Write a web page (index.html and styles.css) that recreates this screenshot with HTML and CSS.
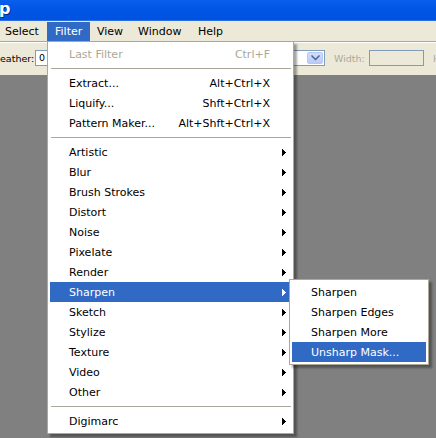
FILE: index.html
```html
<!DOCTYPE html>
<html>
<head>
<meta charset="utf-8">
<link rel="stylesheet" href="styles.css">
</head>
<body>
<div class="app">
  <div class="titlebar"><span class="title">p</span></div>
  <div class="menubar">
    <div class="mb-item mb-select">Select</div>
    <div class="mb-item mb-filter active">Filter
      <div class="menu">
        <div class="mi disabled"><span class="lbl">Last Filter</span><span class="sc">Ctrl+F</span></div>
        <div class="sep"></div>
        <div class="mi"><span class="lbl">Extract...</span><span class="sc">Alt+Ctrl+X</span></div>
        <div class="mi"><span class="lbl">Liquify...</span><span class="sc">Shft+Ctrl+X</span></div>
        <div class="mi"><span class="lbl">Pattern Maker...</span><span class="sc">Alt+Shft+Ctrl+X</span></div>
        <div class="sep"></div>
        <div class="mi sub"><span class="lbl">Artistic</span><svg class="arrow" width="4" height="7" viewBox="0 0 4 7"><path d="M0 0h1v7h-1zM1 1h1v5h-1zM2 2h1v3h-1zM3 3h1v1h-1z"/></svg></div>
        <div class="mi sub"><span class="lbl">Blur</span><svg class="arrow" width="4" height="7" viewBox="0 0 4 7"><path d="M0 0h1v7h-1zM1 1h1v5h-1zM2 2h1v3h-1zM3 3h1v1h-1z"/></svg></div>
        <div class="mi sub"><span class="lbl">Brush Strokes</span><svg class="arrow" width="4" height="7" viewBox="0 0 4 7"><path d="M0 0h1v7h-1zM1 1h1v5h-1zM2 2h1v3h-1zM3 3h1v1h-1z"/></svg></div>
        <div class="mi sub"><span class="lbl">Distort</span><svg class="arrow" width="4" height="7" viewBox="0 0 4 7"><path d="M0 0h1v7h-1zM1 1h1v5h-1zM2 2h1v3h-1zM3 3h1v1h-1z"/></svg></div>
        <div class="mi sub"><span class="lbl">Noise</span><svg class="arrow" width="4" height="7" viewBox="0 0 4 7"><path d="M0 0h1v7h-1zM1 1h1v5h-1zM2 2h1v3h-1zM3 3h1v1h-1z"/></svg></div>
        <div class="mi sub"><span class="lbl">Pixelate</span><svg class="arrow" width="4" height="7" viewBox="0 0 4 7"><path d="M0 0h1v7h-1zM1 1h1v5h-1zM2 2h1v3h-1zM3 3h1v1h-1z"/></svg></div>
        <div class="mi sub"><span class="lbl">Render</span><svg class="arrow" width="4" height="7" viewBox="0 0 4 7"><path d="M0 0h1v7h-1zM1 1h1v5h-1zM2 2h1v3h-1zM3 3h1v1h-1z"/></svg></div>
        <div class="mi sub hl"><span class="lbl">Sharpen</span><svg class="arrow" width="4" height="7" viewBox="0 0 4 7"><path d="M0 0h1v7h-1zM1 1h1v5h-1zM2 2h1v3h-1zM3 3h1v1h-1z"/></svg>
          <div class="submenu">
            <div class="mi"><span class="lbl">Sharpen</span></div>
            <div class="mi"><span class="lbl">Sharpen Edges</span></div>
            <div class="mi"><span class="lbl">Sharpen More</span></div>
            <div class="mi hl"><span class="lbl">Unsharp Mask...</span></div>
          </div>
        </div>
        <div class="mi sub"><span class="lbl">Sketch</span><svg class="arrow" width="4" height="7" viewBox="0 0 4 7"><path d="M0 0h1v7h-1zM1 1h1v5h-1zM2 2h1v3h-1zM3 3h1v1h-1z"/></svg></div>
        <div class="mi sub"><span class="lbl">Stylize</span><svg class="arrow" width="4" height="7" viewBox="0 0 4 7"><path d="M0 0h1v7h-1zM1 1h1v5h-1zM2 2h1v3h-1zM3 3h1v1h-1z"/></svg></div>
        <div class="mi sub"><span class="lbl">Texture</span><svg class="arrow" width="4" height="7" viewBox="0 0 4 7"><path d="M0 0h1v7h-1zM1 1h1v5h-1zM2 2h1v3h-1zM3 3h1v1h-1z"/></svg></div>
        <div class="mi sub"><span class="lbl">Video</span><svg class="arrow" width="4" height="7" viewBox="0 0 4 7"><path d="M0 0h1v7h-1zM1 1h1v5h-1zM2 2h1v3h-1zM3 3h1v1h-1z"/></svg></div>
        <div class="mi sub"><span class="lbl">Other</span><svg class="arrow" width="4" height="7" viewBox="0 0 4 7"><path d="M0 0h1v7h-1zM1 1h1v5h-1zM2 2h1v3h-1zM3 3h1v1h-1z"/></svg></div>
        <div class="sep"></div>
        <div class="mi sub"><span class="lbl">Digimarc</span><svg class="arrow" width="4" height="7" viewBox="0 0 4 7"><path d="M0 0h1v7h-1zM1 1h1v5h-1zM2 2h1v3h-1zM3 3h1v1h-1z"/></svg></div>
      </div>
    </div>
    <div class="mb-item mb-view">View</div>
    <div class="mb-item mb-window">Window</div>
    <div class="mb-item mb-help">Help</div>
  </div>
  <div class="options">
    <span class="opt-label f-label">eather:</span>
    <span class="field field-feather">0</span>
    <span class="combo"><span class="combo-btn"><svg width="9" height="6" viewBox="0 0 9 6"><path d="M0 1l1-1 3.5 3.5L8 0l1 1-4.5 4.5z"/></svg></span></span>
    <span class="opt-label dim w-label">Width:</span>
    <span class="field field-width"></span>
    <span class="opt-label dim h-label">H</span>
  </div>
  <div class="workspace"></div>
</div>
</body>
</html>
```

FILE: styles.css
```css
html, body {
  margin: 0;
  padding: 0;
  overflow: hidden;
}
body {
  width: 436px;
  height: 438px;
  font-family: "DejaVu Sans", Verdana, sans-serif;
  font-size: 11px;
  color: #000;
}
.app {
  width: 436px;
  height: 438px;
  display: flex;
  flex-direction: column;
  background: #808080;
}
.titlebar {
  height: 20px;
  flex: none;
  background: linear-gradient(#0a5fee, #0056e6 40%, #0052df);
  border-bottom: 1px solid #2a6fe0;
  display: flex;
  align-items: flex-start;
}
.title {
  font-family: "DejaVu Sans", sans-serif;
  font-weight: bold;
  font-size: 16px;
  line-height: 16px;
  color: #fff;
  margin-left: -1px;
  margin-top: 1px;
  text-shadow: 1px 1px 0 #0a2a8c;
}
.menubar {
  height: 20px;
  flex: none;
  background: #ece9d8;
  display: flex;
  padding-top: 1px;
  box-sizing: border-box;
  position: relative;
  z-index: 2;
}
.mb-item {
  position: relative;
  height: 19px;
  line-height: 19px;
  padding-left: 7px;
  box-sizing: border-box;
  flex: none;
  white-space: nowrap;
}
.mb-select { width: 49px; margin-left: -2px; }
.mb-filter { width: 43px; padding-left: 8px; }
.mb-view { width: 41px; }
.mb-window { width: 60px; }
.mb-help { width: 40px; }
.mb-item.active {
  background: #316ac5;
  color: #fff;
}
.menu {
  position: absolute;
  left: 0;
  top: 19px;
  width: 247px;
  box-sizing: border-box;
  background: #fff;
  border: 1px solid #aca899;
  padding: 2px;
  box-shadow: 3px 3px 2px rgba(0, 0, 0, 0.35);
  color: #000;
  line-height: normal;
}
.mi {
  position: relative;
  height: 20px;
  display: flex;
  align-items: center;
  padding-left: 19px;
  white-space: nowrap;
}
.mi .lbl { flex: 1; }
.mi .sc { margin-right: 21px; }
.mi .arrow {
  margin-right: 5px;
  fill: currentColor;
  shape-rendering: crispEdges;
}
.mi.disabled { color: #aca899; }
.mi.hl {
  background: #316ac5;
  color: #fff;
}
.sep {
  height: 9px;
  display: flex;
  align-items: center;
  padding-left: 1px;
}
.sep::before {
  content: "";
  flex: 1;
  height: 1px;
  background: #aca899;
}
.submenu {
  position: absolute;
  left: 239px;
  top: -3px;
  width: 140px;
  box-sizing: border-box;
  background: #fff;
  border: 1px solid #aca899;
  padding: 2px;
  box-shadow: 3px 3px 2px rgba(0, 0, 0, 0.35);
  color: #000;
}
.options {
  height: 34px;
  flex: none;
  box-sizing: border-box;
  background: #ece9d8;
  border-top: 1px solid #aca899;
  box-shadow: inset 0 1px 0 #fff;
  display: flex;
  align-items: flex-start;
  padding-top: 8px;
  z-index: 1;
  font-size: 9.5px;
}
.opt-label {
  height: 16px;
  line-height: 17px;
  white-space: nowrap;
  flex: none;
}
.opt-label.dim { color: #aca899; }
.f-label { width: 35px; }
.field {
  height: 16px;
  box-sizing: border-box;
  border: 1px solid #7f9db9;
  line-height: 14px;
  padding-left: 3px;
  flex: none;
}
.field-feather {
  width: 60px;
  background: #fff;
}
.combo {
  margin-left: 145px;
  width: 85px;
  height: 16px;
  box-sizing: border-box;
  border: 1px solid #7f9db9;
  background: #fff;
  display: flex;
  justify-content: flex-end;
  align-items: center;
  padding-right: 1px;
  flex: none;
}
.combo-btn {
  width: 16px;
  height: 12px;
  box-sizing: border-box;
  background: linear-gradient(#d0ddfc, #b8cbf8);
  border: 1px solid #b4c8f5;
  border-radius: 2px;
  display: flex;
  align-items: center;
  justify-content: center;
}
.combo-btn svg { fill: #4d6185; }
.w-label {
  margin-left: 9px;
  width: 35px;
}
.field-width {
  width: 55px;
  background: #ece9d8;
}
.h-label { margin-left: 9px; }
.workspace {
  flex: 1;
  background: #808080;
}
```
